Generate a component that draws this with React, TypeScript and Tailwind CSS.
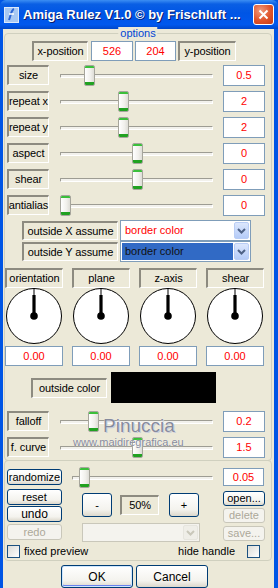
import React from 'react';

type Kids = { children?: React.ReactNode; className?: string };

const Label: React.FC<Kids> = ({ children, className = '' }) => (
  <div
    className={`flex items-center justify-center whitespace-nowrap border-b border-l-2 border-r border-t-2 border-b-white border-l-[#8D8B80] border-r-white border-t-[#8D8B80] tracking-[-0.1px] text-black ${className}`}
  >
    {children}
  </div>
);

const Value: React.FC<Kids> = ({ children, className = '' }) => (
  <div className={`flex items-center justify-center border border-[#7F9DB9] bg-white text-[#FF0000] ${className}`}>
    {children}
  </div>
);

const Btn: React.FC<Kids & { disabled?: boolean }> = ({ children, className = '', disabled }) => (
  <button
    className={`flex items-center justify-center whitespace-nowrap rounded-[3px] border leading-none ${
      disabled
        ? 'border-[#C9C7BA] bg-[#F4F3EE] text-[#ACA899]'
        : 'border-[#003C74] bg-[linear-gradient(to_bottom,#FFFFFF_0%,#F4F3EE_70%,#DCD8CC_100%)] text-black'
    } ${className}`}
  >
    {children}
  </button>
);

const Thumb: React.FC<{ left: number }> = ({ left }) => (
  <div
    className="absolute top-0 flex h-[21px] w-[11px] flex-col overflow-hidden rounded-[2px] border border-[#A6A59C] bg-[linear-gradient(to_right,#FFFFFF,#F1F0EC_60%,#DEDDD7)]"
    style={{ left }}
  >
    <div className="h-[2px] bg-[#3BBF3B]" />
    <div className="flex-1" />
    <div className="h-[3px] bg-[#21A121]" />
  </div>
);

const Slider: React.FC<{ thumb: number; className?: string }> = ({ thumb, className = 'w-[162px]' }) => (
  <div className={`relative h-[21px] ${className}`}>
    <div className="absolute left-[4px] right-[5px] top-[9px] h-[4px] rounded-[1px] border border-b-white border-l-[#9D9C93] border-r-white border-t-[#9D9C93] bg-[#F2F1EC]" />
    <Thumb left={thumb} />
  </div>
);

const SliderRow: React.FC<{ label: string; thumb: number; value: string }> = ({ label, thumb, value }) => (
  <div className="flex h-[21px] items-start">
    <Label className="h-[20px] w-[42px]">{label}</Label>
    <Slider thumb={thumb} className="ml-[7px] w-[162px]" />
    <Value className="ml-[5px] h-[21px] w-[42px]">{value}</Value>
  </div>
);

const Chevron: React.FC<{ color: string }> = ({ color }) => (
  <svg width="9" height="6" viewBox="0 0 9 6">
    <path d="M1 1 L4.5 4.5 L8 1" fill="none" stroke={color} strokeWidth="2" />
  </svg>
);

const Combo: React.FC<{ selected?: boolean; disabled?: boolean; className?: string }> = ({ selected, disabled, className = '' }) => (
  <div
    className={`flex items-center border p-[1px] ${disabled ? 'border-[#C9C7BA] bg-[#F4F3EE]' : 'border-[#7F9DB9] bg-white'} ${className}`}
  >
    <div
      className={`flex h-full flex-1 items-center pl-[3px] ${
        selected ? 'bg-[#316AC5] text-[#111]' : disabled ? '' : 'text-[#FF0000]'
      }`}
    >
      {disabled ? '' : 'border color'}
    </div>
    <div
      className={`ml-[1px] flex h-full w-[15px] items-center justify-center rounded-[2px] border ${
        disabled
          ? 'border-[#E6E5DE] bg-[#EFEEE8]'
          : 'border-[#B9CDF5] bg-[linear-gradient(to_bottom,#DCE7FD,#B4CBF8)]'
      }`}
    >
      <Chevron color={disabled ? '#C9C7BA' : '#4D6185'} />
    </div>
  </div>
);

const Dial: React.FC<{ label: string }> = ({ label }) => (
  <div className="flex w-[58px] flex-col items-center">
    <Label className="h-[20px] w-full">{label}</Label>
    <svg width="58" height="56" viewBox="0 0 58 56">
      <circle cx="29" cy="28" r="27.5" fill="#fff" stroke="#000" />
      <path d="M28.5 0.5 H29.5 V7 H30.6 V26 H27.4 V7 H28.5 Z" fill="#000" />
      <circle cx="29" cy="28" r="3.8" fill="#000" />
    </svg>
    <Value className="mt-[2px] h-[20px] w-full">0.00</Value>
  </div>
);

const Check: React.FC = () => (
  <div className="h-[13px] w-[13px] border border-[#1C5180] bg-[linear-gradient(135deg,#DCDCD7,#FFFFFF)]" />
);

const TitleBar: React.FC = () => (
  <div className="flex h-[29px] items-center rounded-t-[6px] bg-[linear-gradient(to_bottom,#3C8EF3_0%,#0A5FE4_14%,#0055E5_45%,#0058EE_85%,#0046C8_100%)] pl-[4px] pr-[4px]">
    <svg width="15" height="16" viewBox="0 0 15 16">
      <rect x="0.5" y="0.5" width="14" height="15" fill="#A9C8F2" stroke="#DDE9FB" />
      <path d="M10 2 C7 3 7 8 5 13" fill="none" stroke="#2E66D6" strokeWidth="2" />
      <path d="M5 7 H10" fill="none" stroke="#fff" strokeWidth="1.5" />
    </svg>
    <div className="ml-[4px] flex-1 whitespace-nowrap text-[13px] font-bold text-white [text-shadow:1px_1px_#0A1C6B]">
      Amiga Rulez V1.0 © by Frischluft ...
    </div>
    <div className="flex h-[21px] w-[21px] items-center justify-center rounded-[3px] border border-white bg-[radial-gradient(circle_at_35%_30%,#F09A7C,#E0532A_55%,#C43B16)]">
      <svg width="11" height="11" viewBox="0 0 11 11">
        <path d="M1.5 1.5 L9.5 9.5 M9.5 1.5 L1.5 9.5" stroke="#fff" strokeWidth="2" />
      </svg>
    </div>
  </div>
);

export default function App() {
  return (
    <div className="flex h-[588px] w-[278px] flex-col overflow-hidden bg-[#0055E5] font-['Liberation_Sans',Arial,sans-serif] text-[11px]">
      <TitleBar />
      <div className="ml-[3px] mr-[4px] flex-1 bg-[#ECE9D8] pl-[1px] pr-[2px]">
        {/* options group */}
        <div className="relative mt-[4px] h-[428px] rounded-[4px] border border-[#D0D0BF] pl-[2px]">
          <div className="absolute -top-[7px] left-1/2 -translate-x-1/2 bg-[#ECE9D8] px-[2px] leading-[12px] text-[#0046D5]">
            options
          </div>

          <div className="ml-[25px] mt-[7px] flex h-[20px]">
            <Label className="h-[20px] w-[56px]">x-position</Label>
            <Value className="ml-[3px] h-[20px] w-[42px]">526</Value>
            <Value className="ml-[2px] h-[20px] w-[41px]">204</Value>
            <Label className="ml-[2px] h-[20px] w-[58px]">y-position</Label>
          </div>

          <div className="mt-[4px] flex flex-col gap-[5px]">
            <SliderRow label="size" thumb={28} value="0.5" />
            <SliderRow label="repeat x" thumb={62} value="2" />
            <SliderRow label="repeat y" thumb={62} value="2" />
            <SliderRow label="aspect" thumb={76} value="0" />
            <SliderRow label="shear" thumb={76} value="0" />
            <SliderRow label="antialias" thumb={4} value="0" />
          </div>

          <div className="ml-[15px] mt-[4px] flex h-[21px] items-center">
            <Label className="h-[19px] w-[96px]">outside X assume</Label>
            <Combo className="ml-[2px] h-[21px] w-[131px]" />
          </div>
          <div className="ml-[15px] flex h-[21px] items-center">
            <Label className="h-[19px] w-[96px]">outside Y assume</Label>
            <Combo selected className="ml-[2px] h-[21px] w-[131px]" />
          </div>

          <div className="-ml-[2px] mt-[6px] flex gap-[9px]">
            <Dial label="orientation" />
            <Dial label="plane" />
            <Dial label="z-axis" />
            <Dial label="shear" />
          </div>

          <div className="ml-[24px] mt-[6px] flex h-[31px] items-center">
            <Label className="h-[20px] w-[76px]">outside color</Label>
            <div className="ml-[4px] h-[31px] w-[105px] bg-black" />
          </div>

          <div className="mt-[8px] flex flex-col gap-[5px]">
            <SliderRow label="falloff" thumb={32} value="0.2" />
            <SliderRow label="f. curve" thumb={76} value="1.5" />
          </div>

          <div className="pointer-events-none absolute left-[98px] top-[381px] text-[19px] leading-[22px] text-[#868A9C] [text-shadow:0_0_1px_#fff,1px_1px_0_#C9CCD8]">
            Pinuccia
          </div>
          <div className="pointer-events-none absolute left-[68px] top-[402px] text-[11px] leading-[13px] text-[#868A9C] [text-shadow:0_0_1px_#fff]">
            www.maidiregrafica.eu
          </div>
        </div>

        {/* second group */}
        <div className="-mt-px h-[101px] rounded-[4px] border border-[#D0D0BF] pl-[2px]">
          <div className="mt-[5px] flex h-[22px] items-center">
            <Btn className="h-[16px] w-[55px]">randomize</Btn>
            <Slider thumb={11} className="ml-[6px] w-[150px]" />
            <Value className="ml-[5px] h-[18px] w-[41px]">0.05</Value>
          </div>

          <div className="mt-[1px] flex">
            <div className="flex w-[55px] flex-col">
              <Btn className="h-[16px]">reset</Btn>
              <Btn className="mt-[1px] h-[16px] text-[12px]">undo</Btn>
              <Btn disabled className="mt-[2px] h-[16px]">redo</Btn>
            </div>
            <div className="ml-[20px] flex w-[118px] flex-col">
              <div className="mt-[4px] flex items-center">
                <Btn className="h-[24px] w-[30px]">-</Btn>
                <Label className="ml-[8px] h-[20px] w-[39px]">50%</Label>
                <Btn className="ml-[10px] h-[24px] w-[30px]">+</Btn>
              </div>
              <Combo disabled className="mt-[6px] h-[19px] w-[118px]" />
            </div>
            <div className="ml-[23px] flex w-[42px] flex-col">
              <Btn className="mt-[2px] h-[15px]">open...</Btn>
              <Btn disabled className="mt-[2px] h-[15px]">delete</Btn>
              <Btn disabled className="mt-[3px] h-[15px]">save...</Btn>
            </div>
          </div>

          <div className="mt-[3px] flex h-[13px] w-[253px] items-center">
            <Check />
            <span className="ml-[4px]">fixed preview</span>
            <span className="ml-auto">hide handle</span>
            <div className="ml-[12px]">
              <Check />
            </div>
          </div>
        </div>

        <div className="mt-[4px] flex">
          <Btn className="ml-[57px] h-[23px] w-[72px] border-[#003C74] shadow-[inset_0_0_0_1px_#CEE7FF,inset_0_-1px_0_1px_#6982EE] text-[12px]">
            OK
          </Btn>
          <Btn className="ml-[3px] h-[23px] w-[72px] text-[12px]">Cancel</Btn>
        </div>
      </div>
    </div>
  );
}
